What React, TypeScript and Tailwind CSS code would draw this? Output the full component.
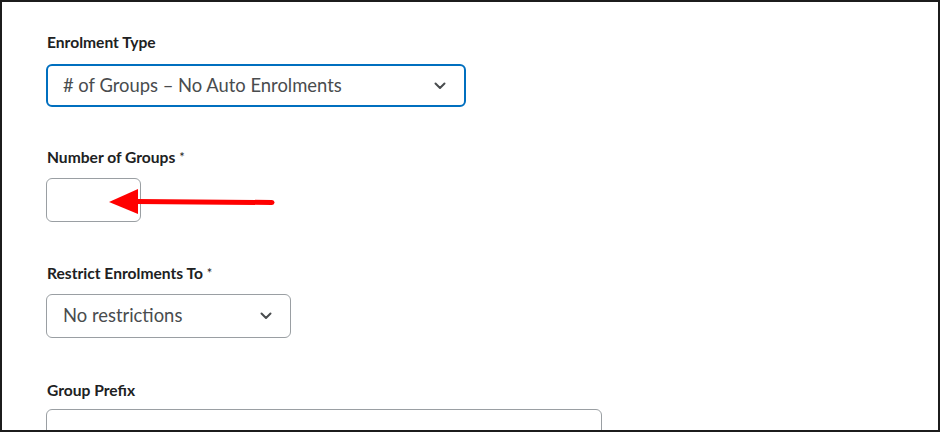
import React from 'react';

function Chevron() {
  return (
    <svg width="12" height="8" viewBox="0 0 12 8" fill="none" className="shrink-0">
      <path d="M1.5 1.5 L6 6 L10.5 1.5" stroke="#494c4e" strokeWidth="2" strokeLinecap="round" strokeLinejoin="round" />
    </svg>
  );
}

function Label({ children, required }: { children: React.ReactNode; required?: boolean }) {
  return (
    <div className="h-5 leading-5 pl-px text-[15.6px] font-bold text-[#202122]">
      {children}
      {required && <span className="ml-1 align-top text-[13px] font-normal text-[#202122]">*</span>}
    </div>
  );
}

export default function App() {
  return (
    <div className="relative w-[940px] h-[432px] overflow-hidden border-2 border-[#1c1c1c] bg-white font-['Lato','Liberation_Sans',sans-serif]">
      <div className="flex flex-col pl-[44px] pt-[30px]">
        {/* Enrolment Type */}
        <Label>Enrolment Type</Label>
        <div className="mt-3 flex h-[43px] w-[420px] items-center justify-between rounded-md border-2 border-[#006fbf] pl-[15px] pr-[18px]">
          <span className="text-[18.4px] text-[#494c4e]">
            # of Groups – No Auto Enrolments
          </span>
          <Chevron />
        </div>

        {/* Number of Groups */}
        <div className="mt-[40px]">
          <Label required>Number of Groups</Label>
        </div>
        <div className="mt-[11px] h-[44px] w-[95px] rounded-md border border-[#9a9fa3]" />

        {/* Restrict Enrolments To */}
        <div className="mt-[41px]">
          <Label required>Restrict Enrolments To</Label>
        </div>
        <div className="mt-[11px] flex h-[44px] w-[245px] items-center justify-between rounded-md border border-[#9a9fa3] pl-[16px] pr-[18px]">
          <span className="text-[18.4px] text-[#494c4e]">No restrictions</span>
          <Chevron />
        </div>

        {/* Group Prefix */}
        <div className="mt-[42px]">
          <Label>Group Prefix</Label>
        </div>
        <div className="mt-[9px] h-[44px] w-[556px] rounded-md border border-[#9a9fa3]" />
      </div>

      {/* annotation arrow */}
      <svg className="absolute left-[100px] top-[182px]" width="180" height="36" viewBox="0 0 180 36">
        <line x1="34" y1="17.5" x2="170" y2="18.5" stroke="#ff0000" strokeWidth="5" strokeLinecap="round" />
        <polygon points="7,18 36,5 36,30" fill="#ff0000" />
      </svg>
    </div>
  );
}
